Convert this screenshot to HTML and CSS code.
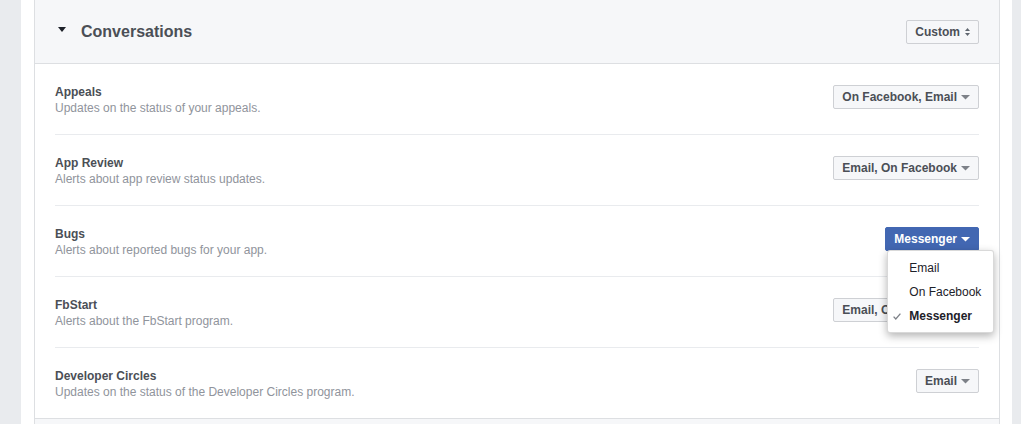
FILE: index.html
```html
<!DOCTYPE html>
<html lang="en">
<head>
<meta charset="utf-8">
<title>Notification settings</title>
<link rel="stylesheet" href="styles.css">
</head>
<body>
<div class="panel">
  <section class="card">
    <header class="card-head">
      <div class="head-title">
        <span class="disclosure"></span>
        <h2>Conversations</h2>
      </div>
      <button class="btn" type="button">Custom
        <svg class="updown" width="5" height="8" viewBox="0 0 5 8"><polygon points="0,3 2.5,0 5,3"/><polygon points="0,5 5,5 2.5,8"/></svg>
      </button>
    </header>
    <ul class="rows">
      <li class="row">
        <div class="info"><div class="name">Appeals</div><div class="desc">Updates on the status of your appeals.</div></div>
        <div class="select"><button class="btn" type="button">On Facebook, Email<svg class="caret" width="9" height="5" viewBox="0 0 9 5"><polygon points="0,0 9,0 4.5,4.5"/></svg></button></div>
      </li>
      <li class="row">
        <div class="info"><div class="name">App Review</div><div class="desc">Alerts about app review status updates.</div></div>
        <div class="select"><button class="btn" type="button">Email, On Facebook<svg class="caret" width="9" height="5" viewBox="0 0 9 5"><polygon points="0,0 9,0 4.5,4.5"/></svg></button></div>
      </li>
      <li class="row">
        <div class="info"><div class="name">Bugs</div><div class="desc">Alerts about reported bugs for your app.</div></div>
        <div class="select">
          <button class="btn btn-primary" type="button">Messenger<svg class="caret" width="9" height="5" viewBox="0 0 9 5"><polygon points="0,0 9,0 4.5,4.5"/></svg></button>
          <ul class="menu">
            <li class="menu-item">Email</li>
            <li class="menu-item">On Facebook</li>
            <li class="menu-item checked"><svg class="check" width="8" height="7" viewBox="0 0 8 7"><polyline points="0.6,3.6 2.8,6 7.4,0.6"/></svg>Messenger</li>
          </ul>
        </div>
      </li>
      <li class="row">
        <div class="info"><div class="name">FbStart</div><div class="desc">Alerts about the FbStart program.</div></div>
        <div class="select"><button class="btn" type="button">Email, On Facebook<svg class="caret" width="9" height="5" viewBox="0 0 9 5"><polygon points="0,0 9,0 4.5,4.5"/></svg></button></div>
      </li>
      <li class="row">
        <div class="info"><div class="name">Developer Circles</div><div class="desc">Updates on the status of the Developer Circles program.</div></div>
        <div class="select"><button class="btn" type="button">Email<svg class="caret" width="9" height="5" viewBox="0 0 9 5"><polygon points="0,0 9,0 4.5,4.5"/></svg></button></div>
      </li>
    </ul>
  </section>
  <section class="card card-next"></section>
</div>
</body>
</html>
```
FILE: styles.css
```css
* { box-sizing: border-box; }

html, body {
  margin: 0;
  height: 424px;
  overflow: hidden;
}

body {
  background: #e9ebee;
  font-family: "Liberation Sans", Arial, Helvetica, sans-serif;
  font-size: 12px;
  color: #4b4f56;
}

.panel {
  margin-left: 21px;
  width: 991px;
  height: 424px;
  overflow: hidden;
  background: #fff;
  padding: 0 12px 0 13px;
}

.card {
  border: 1px solid #dddfe2;
  border-top: none;
  background: #fff;
}

.card-head {
  height: 64px;
  background: #f6f7f9;
  border-bottom: 1px solid #dddfe2;
  display: flex;
  align-items: center;
  justify-content: space-between;
  padding: 0 20px 0 23px;
}

.head-title {
  display: flex;
  align-items: center;
}

.disclosure {
  width: 0;
  height: 0;
  border-left: 4px solid transparent;
  border-right: 4px solid transparent;
  border-top: 5px solid #1d2129;
  margin-right: 15px;
  margin-bottom: 5px;
}

.head-title h2 {
  margin: 0;
  font-size: 16px;
  line-height: 20px;
  font-weight: 700;
  color: #4b4f56;
}

.rows {
  list-style: none;
  margin: 0;
  padding: 0 20px;
}

.row {
  display: flex;
  justify-content: space-between;
  align-items: flex-start;
  padding: 20px 0 18px;
  border-bottom: 1px solid #e9ebee;
}

.row:last-child { border-bottom: none; }

.name {
  font-weight: 700;
  line-height: 16px;
  color: #4b4f56;
}

.desc {
  line-height: 16px;
  color: #90949c;
}

.select {
  position: relative;
  margin-top: 1px;
}

.btn {
  display: inline-flex;
  align-items: center;
  gap: 4px;
  height: 24px;
  padding: 0 8px;
  border: 1px solid #ced0d4;
  border-radius: 2px;
  background: #f6f7f9;
  color: #4b4f56;
  font-family: inherit;
  font-size: 12px;
  font-weight: 700;
  line-height: 22px;
  white-space: nowrap;
  cursor: pointer;
}

.card-head .btn { gap: 5px; }

.btn svg { fill: #7d8188; flex: none; }
.btn .updown { fill: #606770; }

.btn-primary {
  background: #4267b2;
  border-color: #4267b2;
  color: #fff;
}

.btn-primary svg { fill: #fff; }

.menu {
  position: absolute;
  left: 2px;
  top: 100%;
  margin: -1px 0 0;
  padding: 5px 0 4px;
  list-style: none;
  background: #fff;
  border: 1px solid rgba(0, 0, 0, 0.15);
  border-radius: 3px;
  box-shadow: 0 3px 8px rgba(0, 0, 0, 0.3);
  z-index: 5;
}

.menu-item {
  position: relative;
  line-height: 24px;
  padding: 0 12px 0 21px;
  color: #1d2129;
  white-space: nowrap;
}

.menu-item.checked { font-weight: 700; }

.check {
  position: absolute;
  left: 5px;
  top: 9px;
  fill: none;
  stroke: #7d8188;
  stroke-width: 1.3;
}

.card-next {
  height: 40px;
  background: #f6f7f9;
}
```
